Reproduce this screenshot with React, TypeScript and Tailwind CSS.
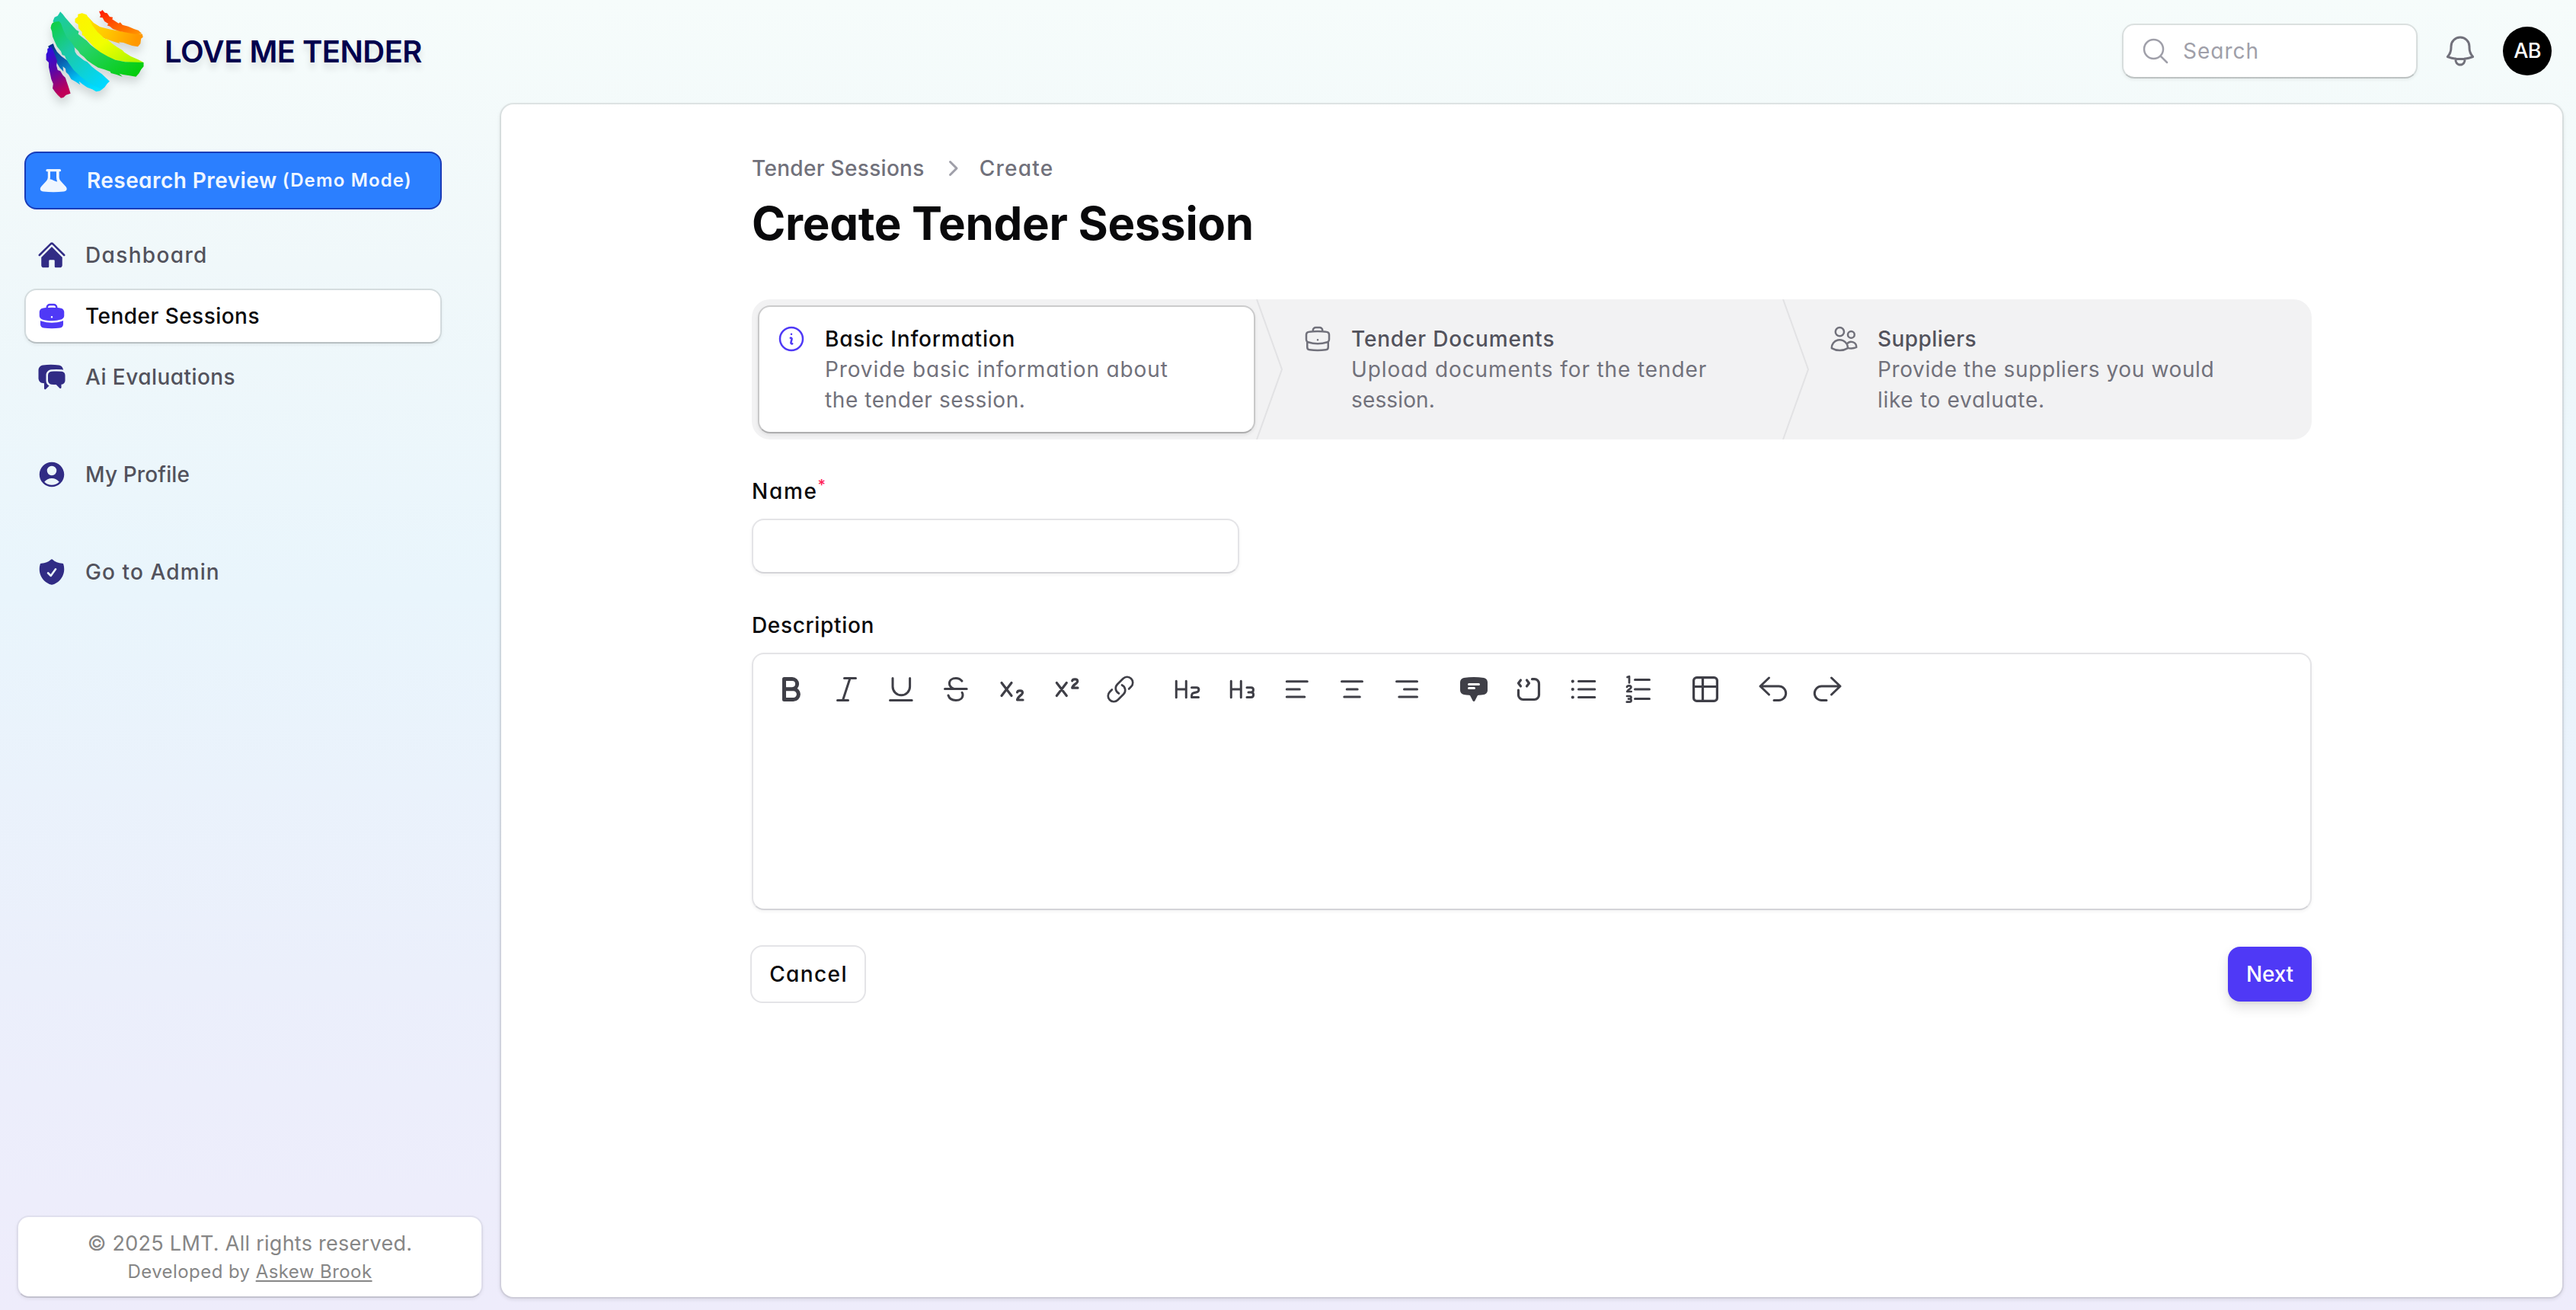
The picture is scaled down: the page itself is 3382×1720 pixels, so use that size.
import type { ReactNode } from 'react';
import {
  HiBriefcase,
  HiChatBubbleLeftRight,
  HiHome,
  HiMiniChatBubbleBottomCenterText,
  HiMiniChevronRight,
  HiOutlineBell,
  HiOutlineBriefcase,
  HiOutlineInformationCircle,
  HiOutlineLink,
  HiOutlineMagnifyingGlass,
  HiOutlineUsers,
  HiShieldCheck,
  HiUserCircle,
} from 'react-icons/hi2';

function Logo() {
  return (
    <svg
      width="136"
      height="124"
      viewBox="56 5 136 124"
      className="shrink-0 overflow-visible drop-shadow-[0_8px_6px_rgba(0,0,0,0.14)]"
    >
      <defs>
        <linearGradient id="red" x1="0" y1="0" x2="1" y2="1">
          <stop offset="0" stopColor="#ff1500" />
          <stop offset=".5" stopColor="#ff5a00" />
          <stop offset="1" stopColor="#ff9800" />
        </linearGradient>
        <linearGradient id="amber" x1="0" y1="0" x2="1" y2=".2">
          <stop offset="0" stopColor="#ffe600" />
          <stop offset=".5" stopColor="#ffc400" />
          <stop offset="1" stopColor="#ff9800" />
        </linearGradient>
        <linearGradient id="yellow" x1="0" y1="0" x2="1" y2="1">
          <stop offset="0" stopColor="#fff200" />
          <stop offset=".5" stopColor="#f2ff00" />
          <stop offset="1" stopColor="#a4f400" />
        </linearGradient>
        <linearGradient id="green" x1="0" y1="0" x2="1" y2="1">
          <stop offset="0" stopColor="#19c8b0" />
          <stop offset=".45" stopColor="#27d36a" />
          <stop offset="1" stopColor="#00cc00" />
        </linearGradient>
        <linearGradient id="teal" x1="0" y1="0" x2=".8" y2="1">
          <stop offset="0" stopColor="#0fcf3c" />
          <stop offset=".4" stopColor="#1cc9a4" />
          <stop offset="1" stopColor="#00d8ff" />
        </linearGradient>
        <linearGradient id="blue" x1="0" y1="0" x2=".8" y2="1">
          <stop offset="0" stopColor="#072a80" />
          <stop offset=".35" stopColor="#0a5fb0" />
          <stop offset=".7" stopColor="#00c0f4" />
          <stop offset="1" stopColor="#00e0ff" />
        </linearGradient>
        <linearGradient id="violet" x1="0" y1="0" x2=".3" y2="1">
          <stop offset="0" stopColor="#2410e8" />
          <stop offset=".5" stopColor="#5a06a8" />
          <stop offset="1" stopColor="#c00058" />
        </linearGradient>
      </defs>
      <g transform="scale(.4209 .3333)">
        <path
          fill="url(#amber)"
          d="M262 66 L276 68 L292 90 L312 106 L345 116 L380 124 L418 130 L444 134 L446 146 L440 152 L438 172 L430 184 L412 180 L398 174 L385 168 L370 166 L375 172 L350 162 L328 152 L308 140 L290 122 L276 100z"
        />
        <path
          fill="url(#red)"
          d="M309 44 L315 45 L319 39 L327 50 L334 52 L342 66 L352 68 L350 76 L360 84 L370 92 L375 88 L382 98 L400 104 L418 114 L432 120 L442 132 L420 134 L395 128 L370 122 L352 114 L343 104 L334 100 L338 94 L326 84 L320 70 L311 68 L314 60z"
        />
        <path
          fill="url(#yellow)"
          d="M234 74 L243 66 L243 56 L256 52 L270 58 L280 78 L288 100 L304 126 L318 142 L325 152 L334 154 L350 172 L366 186 L382 198 L388 206 L408 222 L430 234 L448 246 L420 248 L390 244 L360 236 L334 222 L310 206 L292 184 L280 168 L268 152 L262 142 L256 138 L256 126 L245 112 L244 96 L234 88z"
        />
        <path
          fill="url(#green)"
          d="M165 84 L170 68 L180 62 L188 46 L196 56 L204 70 L218 90 L228 104 L238 118 L246 124 L244 134 L254 144 L262 152 L270 160 L282 176 L296 190 L314 206 L336 222 L360 236 L390 244 L448 246 L448 262 L440 274 L434 288 L424 302 L404 298 L384 294 L372 290 L382 302 L364 294 L346 288 L344 282 L326 274 L306 266 L288 252 L272 238 L262 224 L250 212 L244 200 L234 188 L226 180 L190 130z"
        />
        <path
          fill="url(#blue)"
          d="M150 182 L158 176 L166 172 L170 186 L178 204 L192 222 L212 240 L240 270 L280 310 L320 350 L312 358 L300 361 L288 352 L272 344 L258 332 L246 320 L250 334 L236 322 L222 312 L214 294 L206 284 L204 270 L196 262 L198 282 L186 266 L178 250 L166 226z"
        />
        <path
          fill="url(#teal)"
          d="M160 98 L164 90 L172 86 L184 84 L190 92 L198 120 L208 146 L222 166 L232 184 L234 204 L240 216 L252 228 L262 238 L272 244 L286 262 L300 276 L318 292 L330 306 L342 320 L334 330 L326 344 L318 352 L296 340 L272 322 L250 300 L230 276 L214 248 L206 232 L202 220 L194 216 L190 202 L178 184 L170 162 L164 144 L162 124 L158 110z"
        />
        <path
          fill="url(#violet)"
          d="M144 214 L148 204 L148 192 L160 184 L166 198 L172 218 L178 240 L176 258 L180 276 L188 280 L196 296 L204 306 L208 322 L212 336 L216 352 L220 368 L206 374 L198 384 L190 386 L180 374 L172 362 L164 348 L166 330 L160 312 L156 288 L152 264 L152 246 L144 236z"
        />
      </g>
    </svg>
  );
}

function Beaker() {
  return (
    <svg width="40" height="40" viewBox="0 0 40 40" fill="currentColor">
      <path
        fillRule="evenodd"
        d="M12 5h16.500a1.600 1.600 0 0 1 0 3.300h-.8v7.200c0 2.200.8 4 2.300 5.500l6.200 6.800c3 3.400 1.200 6.500-2.700 6.800-8.700.8-17.800.8-26.500 0-3.900-.3-5.700-3.400-2.700-6.800L10.500 21c1.500-1.500 2.300-3.300 2.300-5.500V8.300H12A1.600 1.600 0 0 1 12 5zM16 8.300v7.500c0 .9-.1 1.700-.4 2.500 3.600.1 5 2.700 9.600 3.200-.8-1.700-1.200-3.600-1.200-5.700V8.300z"
      />
    </svg>
  );
}

function NavItem({
  icon,
  label,
  tracking,
  active = false,
}: {
  icon: ReactNode;
  label: string;
  tracking: string;
  active?: boolean;
}) {
  return (
    <a
      className={
        active
          ? 'flex h-[72px] -my-px items-center gap-6 rounded-2xl border-2 border-black/10 border-b-black/20 bg-white bg-clip-padding pl-[14px] text-[28px] font-medium text-zinc-950 shadow-[0_2px_4px_rgba(0,0,0,0.06)]'
          : 'flex h-[70px] items-center gap-6 pl-4 text-[28px] font-medium text-zinc-600'
      }
    >
      <span className={active ? 'text-indigo-600' : 'text-indigo-900'}>{icon}</span>
      <span className={tracking}>{label}</span>
    </a>
  );
}

function Divider() {
  return (
    <svg
      width="36"
      height="184"
      viewBox="0 0 36 184"
      fill="none"
      stroke="#e2e2e4"
      strokeWidth="2"
      className="absolute left-[662px] top-0"
    >
      <path d="M1 0L34 92L1 184" />
    </svg>
  );
}

function StepBody({
  icon,
  title,
  titleTracking,
  children,
}: {
  icon: ReactNode;
  title: string;
  titleTracking: string;
  children: ReactNode;
}) {
  return (
    <>
      {icon}
      <div className="text-[28px] leading-10 whitespace-nowrap">
        <div className={titleTracking}>{title}</div>
        {children}
      </div>
    </>
  );
}

function Tool({ children, width = 3 }: { children: ReactNode; width?: number }) {
  return (
    <button className="flex h-[72px] w-[72px] items-center justify-center">
      <svg
        width="40"
        height="40"
        viewBox="0 0 40 40"
        fill="none"
        stroke="currentColor"
        strokeWidth={width}
        strokeLinecap="round"
        strokeLinejoin="round"
      >
        {children}
      </svg>
    </button>
  );
}

function Toolbar() {
  return (
    <div className="flex pl-[14px] pt-[10px] text-zinc-700">
      <Tool width={5}>
        <path d="M10.5 6.5h10.5a6.6 6.6 0 0 1 0 13.2h-10.5zM10.5 19.7h12a6.9 6.9 0 0 1 0 13.8h-12z" />
      </Tool>
      <Tool>
        <path d="M17.5 5.5h15M8.5 34.5h14M25 5.5L15.5 34.5" />
      </Tool>
      <Tool>
        <path d="M9 5.5v11a11.3 11.3 0 0 0 22.6 0v-11M5.5 34.5h28.7" />
      </Tool>
      <Tool>
        <path d="M5.5 19.5h28.7M28 9.2c-2-2.4-4.8-3.7-8-3.7-5 0-8.6 2.6-8.6 6.8 0 3.4 2 5.6 6 7.2M10 28c1.2 4 4.8 6.5 10 6.5 5.3 0 9-2.8 9-7 0-1.2-.3-2.3-.9-3.2" />
      </Tool>
      <Tool width={3.2}>
        <path d="M8 11.5l13 17M21 11.5l-13 17M28.5 24c.6-3 7-3 7 .4 0 3-6.5 5-7 9.6h7.5" />
      </Tool>
      <Tool width={3.2}>
        <path d="M8.3 11.5l13 17M21.3 11.5l-13 17M28.7 9c.6-3 7-3 7 .4 0 3-6.5 4.6-7 8.8h7.3" />
      </Tool>
      <button className="mr-4 flex h-[72px] w-[72px] items-center justify-center">
        <HiOutlineLink size={40} strokeWidth={1.6} />
      </button>
      <Tool>
        <path d="M5.3 9.2v21.6M18.3 9.2v21.6M5.3 20h13M25.5 17.7h6.3c4 0 4 5 .5 6l-4 1.1c-2.6.7-2.8 2-2.8 5.7h9" />
      </Tool>
      <Tool>
        <path d="M5.3 9.2v21.6M18.3 9.2v21.6M5.3 20h13M26 17.7h5.5c4 0 4 6.2 0 6.3h-3.5M31.5 24c4.2 0 4.2 6.6 0 6.6h-5.5" />
      </Tool>
      <Tool>
        <path d="M6.3 9.8h27M6.3 20h17M6.3 30h23.5" />
      </Tool>
      <Tool>
        <path d="M6.5 9.8h27M13.2 20h14M9.8 30h20.5" />
      </Tool>
      <Tool>
        <path d="M6.5 9.8h27M16.5 20h17M9.8 30h23.7" />
      </Tool>
      <button className="ml-4 flex h-[72px] w-[72px] items-center justify-center">
        <HiMiniChatBubbleBottomCenterText size={40} />
      </button>
      <Tool width={3.2}>
        <path d="M9.5 8l-3 4 3 4M17.5 8l3 4-3 4M24.5 6.7h3a6 6 0 0 1 6 6v14.800a6 6 0 0 1-6 6h-15a6 6 0 0 1-6-6v-6.500" />
      </Tool>
      <Tool>
        <path d="M13.5 9.6h21.3M13.5 20h21.3M13.5 30.5h21.3" />
        <path d="M5.8 9.6h.01M5.8 20h.01M5.8 30.5h.01" strokeWidth="4.2" />
      </Tool>
      <Tool>
        <path d="M15.500 7.5h19M15.500 20h19M15.500 32.500h19" />
        <path
          strokeWidth="2.7"
          d="M5.5 4l2.5-.8v8.3M5 17c.6-2.4 5.5-2.2 5.5.4 0 2-4.5 2.800-5.300 5.600h5.500M5 29h3.400c3 0 2.600 3.600 0 3.700h-1.400M8.400 32.700c3 0 3 4-.2 4h-3.400"
        />
      </Tool>
      <div className="mx-4">
        <Tool width={3.2}>
          <rect x="4.6" y="4.6" width="30.8" height="30.8" rx="4" />
          <path d="M16.5 4.6v30.8M4.6 16.5h30.8" />
        </Tool>
      </div>
      <Tool>
        <path d="M15.500 5L4 16l11.500 11M4 16h24.500a9.200 9.200 0 0 1 0 18.400h-6.500" />
      </Tool>
      <Tool>
        <path d="M25.500 5L37 16l-11.500 11M37 16h-24.500a9.200 9.200 0 0 0 0 18.400h6.500" />
      </Tool>
    </div>
  );
}

export default function App() {
  return (
    <div className="flex h-[1720px] w-full flex-col bg-[linear-gradient(180deg,#f6fcfb_0%,#f0f8fa_20%,#e9f5fc_45%,#ebeffb_75%,#eeecfb_100%)] font-['Inter',sans-serif] antialiased [font-feature-settings:'cv11']">
      <header className="flex h-[137px] shrink-0 items-center pb-[3px] pl-14 pr-8">
        <Logo />
        <span className="ml-[24px] mt-[2px] text-[40px] font-semibold leading-none tracking-[-0.54px] text-[#02014d] [text-shadow:0_8px_8px_rgba(0,0,0,0.1)]">
          LOVE ME TENDER
        </span>
        <div className="ml-auto flex h-[72px] w-[388px] items-center rounded-2xl border-2 border-black/10 border-b-black/20 bg-white bg-clip-padding pl-[22px] text-[28px] text-zinc-400 shadow-[0_2px_4px_rgba(0,0,0,0.06)]">
          <HiOutlineMagnifyingGlass size={40} />
          <span className="ml-4 tracking-[1px]">Search</span>
        </div>
        <HiOutlineBell size={48} className="mx-8 text-zinc-500" />
        <div className="flex h-16 w-16 items-center justify-center rounded-full bg-black text-[27px] font-medium tracking-[-0.8px] text-white">
          AB
        </div>
      </header>

      <div className="flex min-h-0 flex-1">
        <aside className="flex w-[658px] shrink-0 flex-col pb-[17px] pt-[62px]">
          <nav className="ml-8 flex w-[548px] flex-col">
            <a className="mb-[25px] flex h-[76px] items-center rounded-2xl border-2 border-blue-800 bg-blue-500 pl-4 font-semibold text-blue-50">
              <Beaker />
              <span className="ml-6 text-[28px] tracking-[0.43px]">Research Preview</span>
              <span className="ml-[7px] text-[24px] tracking-[1.14px]">(Demo Mode)</span>
            </a>
            <div className="flex flex-col gap-[10px]">
              <NavItem icon={<HiHome size={40} />} label="Dashboard" tracking="tracking-[1.35px]" />
              <NavItem icon={<HiBriefcase size={40} />} label="Tender Sessions" tracking="tracking-[0.46px]" active />
              <NavItem icon={<HiChatBubbleLeftRight size={40} />} label="Ai Evaluations" tracking="tracking-[0.44px]" />
            </div>
            <div className="mt-[58px] flex flex-col gap-[58px]">
              <NavItem icon={<HiUserCircle size={40} />} label="My Profile" tracking="tracking-[0.14px]" />
              <NavItem icon={<HiShieldCheck size={40} />} label="Go to Admin" tracking="tracking-[1.1px]" />
            </div>
          </nav>
          <div className="mb-[-1px] ml-[22px] mt-auto flex h-[108px] w-[612px] flex-col items-center rounded-2xl border-2 border-black/5 border-b-black/15 bg-white bg-clip-padding pt-[15px] text-[#868686] shadow-[0_2px_4px_rgba(0,0,0,0.06)]">
            <div className="text-[27px] leading-10 tracking-[0.27px]">© 2025 LMT. All rights reserved.</div>
            <div className="text-[24px] leading-[34px] tracking-[0.43px]">
              Developed by <a className="underline decoration-2 underline-offset-[3px]">Askew Brook</a>
            </div>
          </div>
        </aside>

        <main className="mb-[17px] mr-[18px] min-w-0 flex-1 rounded-2xl bg-white shadow-[0_0_0_2px_rgba(9,9,11,0.07),0_2px_4px_2px_rgba(0,0,0,0.08)]">
          <div className="mx-auto flex w-[2048px] flex-col pt-[64px]">
            <div className="flex h-10 items-center text-[28px] font-medium text-zinc-500">
              <span className="tracking-[0.31px]">Tender Sessions</span>
              <HiMiniChevronRight size={40} className="ml-[16px] text-zinc-400" />
              <span className="ml-[16px] tracking-[1.27px]">Create</span>
            </div>
            <h1 className="mt-[16px] h-[72px] text-[60px] font-bold leading-[72px] tracking-[-0.32px] text-zinc-950">
              Create Tender Session
            </h1>

            <div className="mt-[64px] flex h-[184px] rounded-3xl bg-[#f2f2f3] text-zinc-500">
              <div className="relative w-[691px] p-2">
                <div className="flex h-[168px] w-[653px] gap-6 rounded-2xl border-2 border-black/15 border-b-black/25 bg-white bg-clip-padding pl-[22px] pt-[22px] shadow-[0_2px_4px_rgba(0,0,0,0.08)]">
                  <StepBody
                    icon={<HiOutlineInformationCircle size={40} className="text-indigo-600" />}
                    title="Basic Information"
                    titleTracking="font-medium tracking-[0.81px] text-zinc-950"
                  >
                    <div className="tracking-[0.86px]">Provide basic information about</div>
                    <div className="tracking-[0.58px]">the tender session.</div>
                  </StepBody>
                </div>
                <Divider />
              </div>
              <div className="relative flex w-[691px] gap-6 pl-8 pt-8">
                <StepBody
                  icon={<HiOutlineBriefcase size={40} />}
                  title="Tender Documents"
                  titleTracking="font-medium tracking-[0.83px] text-zinc-600"
                >
                  <div className="tracking-[0.89px]">Upload documents for the tender</div>
                  <div className="tracking-[0.14px]">session.</div>
                </StepBody>
                <Divider />
              </div>
              <div className="flex gap-6 pl-8 pt-8">
                <StepBody
                  icon={<HiOutlineUsers size={40} />}
                  title="Suppliers"
                  titleTracking="font-medium tracking-[0.44px] text-zinc-600"
                >
                  <div className="tracking-[0.63px]">Provide the suppliers you would</div>
                  <div className="tracking-[0.69px]">like to evaluate.</div>
                </StepBody>
              </div>
            </div>

            <label className="mt-[48px] flex h-10 items-center text-[28px] font-medium text-zinc-950">
              <span className="tracking-[1.7px]">Name</span>
              <span className="mb-[16px] text-[20px] leading-none text-rose-500">*</span>
            </label>
            <div className="mt-4 h-[72px] w-[640px] rounded-2xl border-2 border-zinc-200 border-b-zinc-300 bg-white shadow-[0_2px_4px_rgba(0,0,0,0.05)]" />

            <label className="mt-[48px] flex h-10 items-center text-[28px] font-medium tracking-[0.65px] text-zinc-950">
              Description
            </label>
            <div className="mt-4 h-[338px] rounded-2xl border-2 border-zinc-200 border-b-zinc-300 bg-white shadow-[0_2px_4px_rgba(0,0,0,0.05)]">
              <Toolbar />
            </div>

            <div className="-ml-[2px] mt-[46px] flex items-center justify-between text-[28px] font-medium">
              <button className="h-[76px] w-[152px] rounded-2xl border-2 border-zinc-200 bg-white pl-px tracking-[1.4px] text-zinc-950">
                Cancel
              </button>
              <button className="h-[72px] w-[110px] rounded-2xl bg-indigo-600 tracking-[-0.2px] text-white shadow-[0_8px_16px_rgba(0,0,0,0.12),0_2px_4px_rgba(0,0,0,0.06)]">
                Next
              </button>
            </div>
          </div>
        </main>
      </div>
    </div>
  );
}
